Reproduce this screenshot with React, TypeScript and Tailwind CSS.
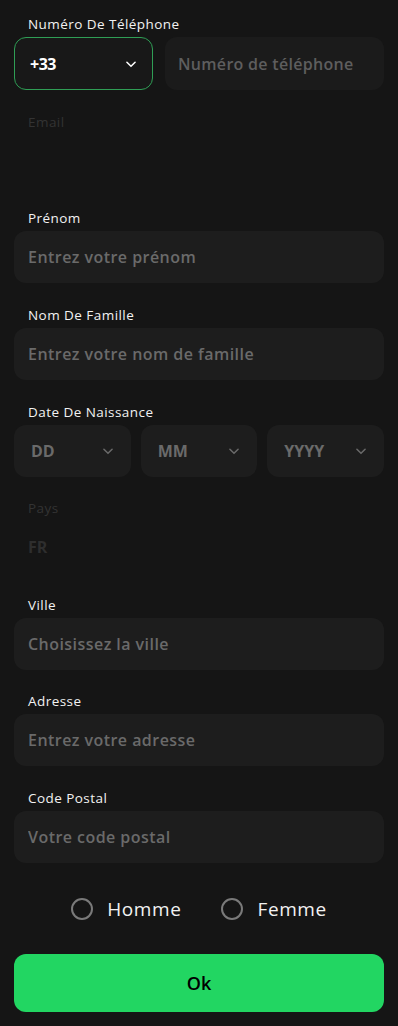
import React, { useState } from 'react';

const font = { fontFamily: '"Open Sans", "Noto Sans", sans-serif' };

const Chevron = ({ className }: { className?: string }) => (
  <svg className={className} width="14" height="14" viewBox="0 0 24 24" fill="none" stroke="currentColor" strokeWidth="2.6" strokeLinecap="round" strokeLinejoin="round">
    <path d="M5 9l7 7 7-7" />
  </svg>
);

const Label = ({ children, faint }: { children: React.ReactNode; faint?: boolean }) => (
  <div className={`pl-[14px] mb-[5px] h-[16px] text-[13.5px] leading-[16px] tracking-[0.45px] ${faint ? 'text-[#333333]' : 'text-[#f2f2f2]'}`}>
    {children}
  </div>
);

const TextField = ({ label, placeholder }: { label: string; placeholder: string }) => (
  <div>
    <Label>{label}</Label>
    <input
      placeholder={placeholder}
      className="w-full h-[52px] rounded-xl bg-[#1d1d1d] px-[14px] text-[16px] tracking-[0.45px] font-semibold text-white placeholder:text-[#6a6a6a] outline-none"
      style={font}
    />
  </div>
);

const DateSelect = ({ text }: { text: string }) => (
  <div className="h-[52px] rounded-xl bg-[#1d1d1d] flex items-center justify-between pl-[17px] pr-[16px] text-[#6a6a6a]">
    <span className="text-[16px] font-bold">{text}</span>
    <Chevron />
  </div>
);

const Radio = ({ label, checked, onClick }: { label: string; checked: boolean; onClick: () => void }) => (
  <button onClick={onClick} className="flex items-center gap-[14px]">
    <span className="w-[22px] h-[22px] rounded-full border-2 border-[#7a7a7a] flex items-center justify-center">
      {checked && <span className="w-[10px] h-[10px] rounded-full bg-[#22d662]" />}
    </span>
    <span className="text-[19px] tracking-[0.6px] text-[#f2f2f2]">{label}</span>
  </button>
);

const App: React.FC = () => {
  const [gender, setGender] = useState<'h' | 'f' | null>(null);

  return (
    <div className="min-h-screen w-full bg-[#151515] px-[14px] pt-[16px] pb-[14px]" style={font}>
      <div className="flex flex-col gap-[23.65px]">
        <div>
          <Label>Numéro De Téléphone</Label>
          <div className="flex gap-[12px]">
            <div className="w-[139px] h-[53px] shrink-0 rounded-xl border border-[#2f9e55] bg-[#181818] flex items-center justify-between pl-[15px] pr-[14px] text-white">
              <span className="text-[16px] font-bold tracking-[-0.5px]">+33</span>
              <Chevron />
            </div>
            <input
              placeholder="Numéro de téléphone"
              className="flex-1 min-w-0 h-[53px] rounded-xl bg-[#1b1b1b] px-[13px] text-[16px] tracking-[0.3px] font-semibold text-white placeholder:text-[#5e5e5e] outline-none"
              style={font}
            />
          </div>
        </div>

        <div>
          <Label faint>Email</Label>
          <div className="h-[52px]" />
        </div>

        <TextField label="Prénom" placeholder="Entrez votre prénom" />
        <TextField label="Nom De Famille" placeholder="Entrez votre nom de famille" />

        <div>
          <Label>Date De Naissance</Label>
          <div className="grid grid-cols-3 gap-[10px]">
            <DateSelect text="DD" />
            <DateSelect text="MM" />
            <DateSelect text="YYYY" />
          </div>
        </div>

        <div>
          <Label faint>Pays</Label>
          <div className="h-[52px] flex items-center px-[14px] text-[16px] font-bold text-[#2e2e2e]">FR</div>
        </div>

        <TextField label="Ville" placeholder="Choisissez la ville" />
        <TextField label="Adresse" placeholder="Entrez votre adresse" />
        <TextField label="Code Postal" placeholder="Votre code postal" />
      </div>

      <div className="flex justify-center gap-[40px] mt-[34px] h-[24px] items-center">
        <Radio label="Homme" checked={gender === 'h'} onClick={() => setGender('h')} />
        <Radio label="Femme" checked={gender === 'f'} onClick={() => setGender('f')} />
      </div>

      <button className="mt-[33px] w-full h-[58px] rounded-xl bg-[#22d662] text-black text-[18px] font-semibold">
        Ok
      </button>
    </div>
  );
};

export default App;
